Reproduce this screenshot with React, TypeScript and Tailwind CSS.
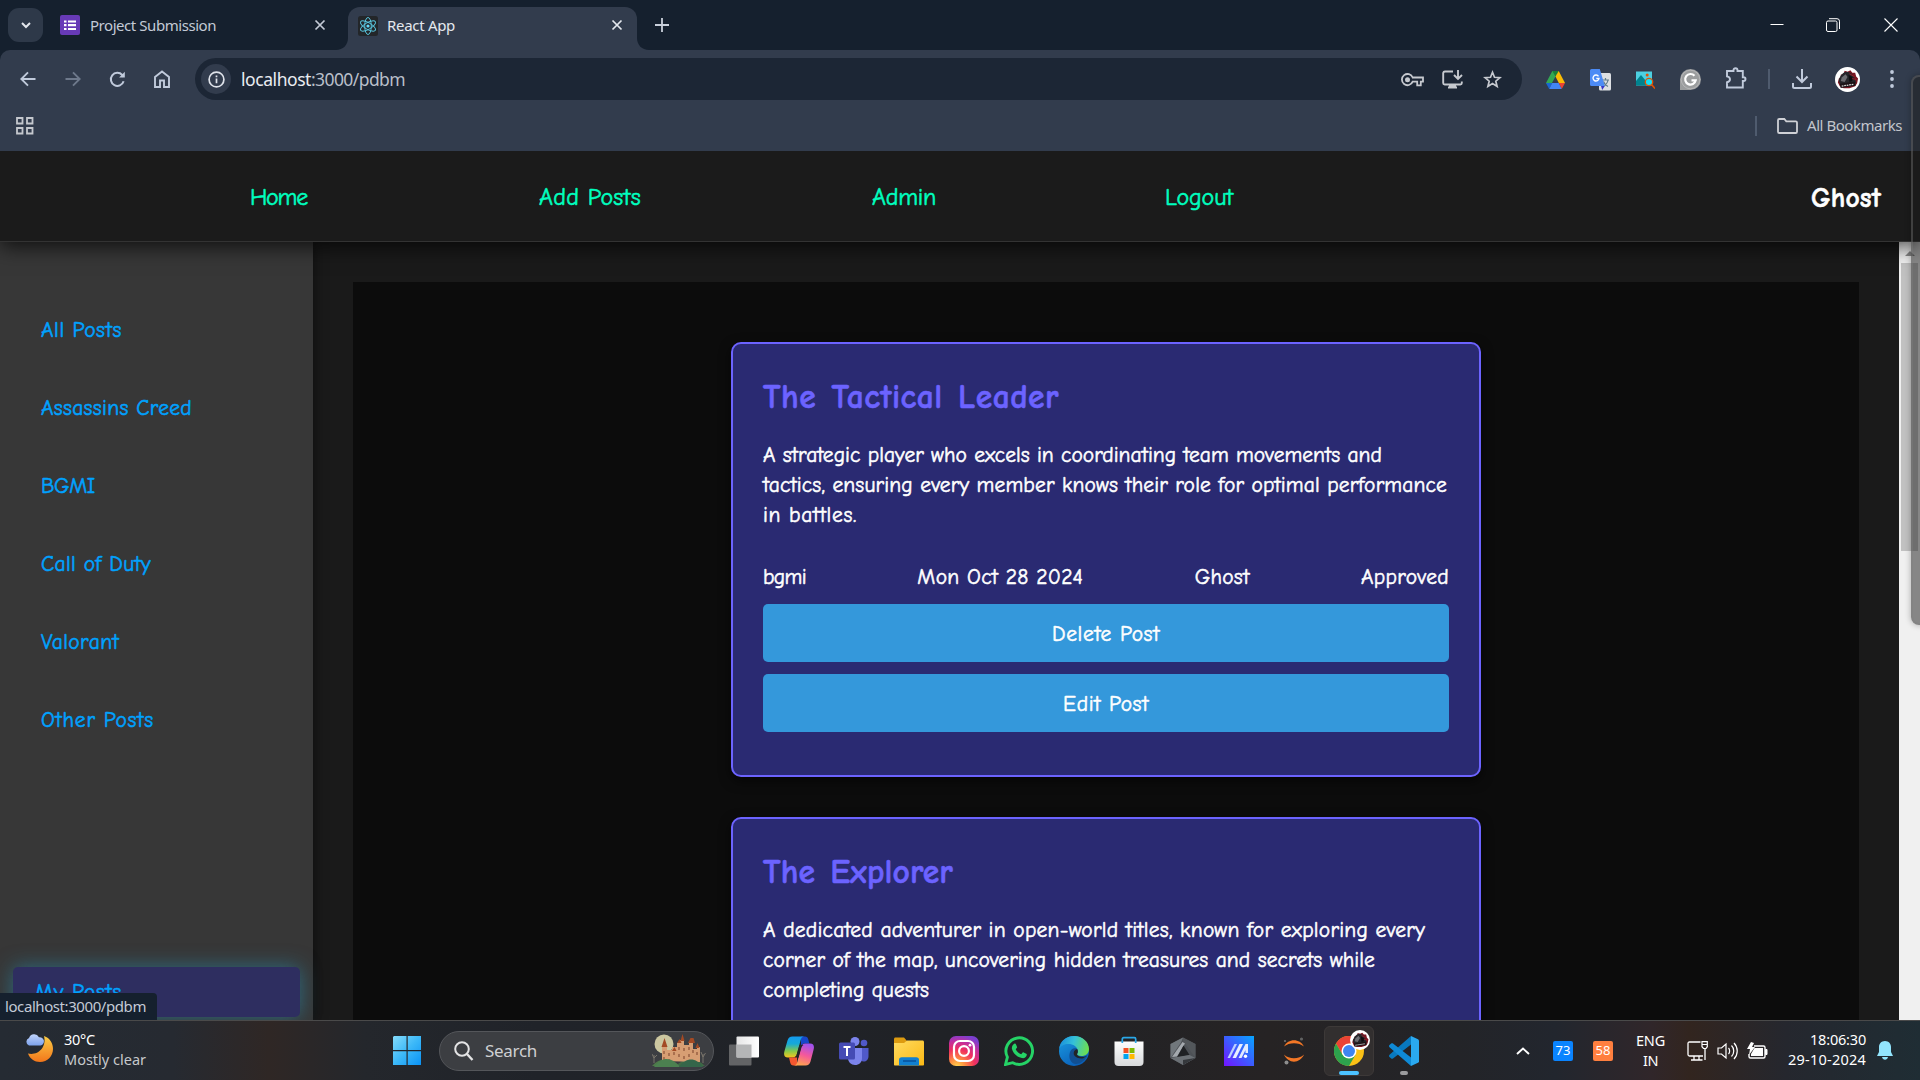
import { useLayoutEffect, useRef, useState } from "react";
import type { ReactNode } from "react";
import { clsx } from "clsx";

const comic = "font-['Comic_Sans_MS','Comic_Neue','Noto_Sans',sans-serif] [-webkit-text-stroke:0.55px_currentColor]";
const segoe = "font-['Segoe_UI','Noto_Sans',sans-serif]";

/** One line of text whose letter spacing is tuned so that it fills `width` pixels. */
function Fit({ width, className, children }: { width: number; className?: string; children: string }) {
  const ref = useRef<HTMLSpanElement>(null);
  const [spacing, setSpacing] = useState(0);
  useLayoutEffect(() => {
    if (ref.current) {
      const natural = ref.current.getBoundingClientRect().width;
      setSpacing((width - natural) / children.length);
    }
  }, [width, children]);
  return (
    <span ref={ref} className={clsx("inline-block w-fit whitespace-pre", className)} style={{ letterSpacing: `${spacing}px` }}>
      {children}
    </span>
  );
}

function Svg({ w, h = w, box, className, children }: { w: number; h?: number; box: string; className?: string; children: ReactNode }) {
  return (
    <svg width={w} height={h} viewBox={box} fill="none" className={clsx("block shrink-0", className)}>
      {children}
    </svg>
  );
}

function CloseX({ className }: { className?: string }) {
  return (
    <Svg w={12} box="0 0 12 12" className={className}>
      <path d="M1.500 1.500l9 9M10.500 1.500l-9 9" stroke="currentColor" strokeWidth="1.700" />
    </Svg>
  );
}

function GhostAvatar({ size }: { size: number }) {
  return (
    <Svg w={size} box="0 0 26 26">
      <circle cx="13" cy="13" r="13" fill="#fff" />
      <path d="M3 16l1-4 2-1 0-3 3-1 1-3 3 1 3-1.500 2 2.500 3 0 1 4 2 2-1 5-2 3-6 2-6 0-4-2z" fill="#7a1520" />
      <path d="M4 15c0-4 3-9 8-10 4 0 7 3 8 6l2 5-6 3-9 1z" fill="#26262a" />
      <path d="M7 11l4-3.500 2 3-3 5-4-1z" fill="#6d6d72" />
      <path d="M14 8l4 2.500v4l-3 1z" fill="#0d0d0f" />
      <path d="M15 7l5 3M18 12l4 1" stroke="#9c1c2a" strokeWidth="1" />
      <path d="M5 17.500l16-2.500 .4 4.500-15.500 2.300z" fill="#1b1316" />
      <path d="M7 19.800l12.500-1.900" stroke="#d8d8d8" strokeWidth="1.300" strokeDasharray="1.800 .8" />
    </Svg>
  );
}

function TitleBar() {
  return (
    <div className="flex h-[50px] items-center bg-[#15202e] text-[#c3cad6]">
      <div className="ml-2 flex h-[34px] w-[35px] items-center justify-center rounded-[11px] bg-[#2e3949]">
        <Svg w={12} box="0 0 12 12">
          <path d="M2 4l4 4 4-4" stroke="#e3e6ec" strokeWidth="2" />
        </Svg>
      </div>
      <Svg w={20} box="0 0 20 20" className="ml-[17px]">
        <rect width="20" height="20" rx="2" fill="#673ab7" />
        <path d="M4 6.500h2.500M4 10.200h2.500M4 14h2.500M8 6.500h8M8 10.200h8M8 14h8" stroke="#fff" strokeWidth="2.200" />
      </Svg>
      <Fit width={126} className="ml-2.5 text-[15px]">Project Submission</Fit>
      <CloseX className="ml-[98px]" />
      <svg width="12" height="12" viewBox="0 0 12 12" className="ml-[10px] block shrink-0 self-end">
        <path d="M12 0v12H0c7 0 12-5 12-12z" fill="#323c4d" />
      </svg>
      <div className="flex h-[43px] w-[289px] items-center self-end rounded-t-[12px] bg-[#323c4d] pb-[7px] text-[#e4e8ee]">
        <Svg w={20} box="0 0 20 20" className="mt-px ml-[10px]">
          <rect width="20" height="20" rx="2.500" fill="#232629" />
          <g stroke="#58c4dc" strokeWidth="1">
            <ellipse cx="10" cy="10" rx="8.500" ry="3.300" transform="rotate(90 10 10)" />
            <ellipse cx="10" cy="10" rx="8.500" ry="3.300" transform="rotate(30 10 10)" />
            <ellipse cx="10" cy="10" rx="8.500" ry="3.300" transform="rotate(150 10 10)" />
          </g>
          <circle cx="10" cy="10" r="1.600" fill="#61dafb" />
        </Svg>
        <Fit width={68} className="ml-[9px] text-[15px]">React App</Fit>
        <CloseX className="ml-[156px]" />
      </div>
      <svg width="12" height="12" viewBox="0 0 12 12" className="block shrink-0 self-end">
        <path d="M0 0v12h12C5 12 0 7 0 0z" fill="#323c4d" />
      </svg>
      <Svg w={14} box="0 0 14 14" className="ml-[6px]">
        <path d="M7 0v14M0 7h14" stroke="#c9d0db" strokeWidth="1.800" />
      </Svg>
      <div className="ml-auto flex items-center text-white">
        <Svg w={14} box="0 0 14 14"><path d="M0.500 6.500h13" stroke="#fff" /></Svg>
        <Svg w={14} box="0 0 14 14" className="ml-[42px]">
          <rect x="0.500" y="3" width="10.500" height="10.500" rx="1.500" stroke="#fff" />
          <path d="M3 .7h8a2.500 2.500 0 0 1 2.500 2.500V11" stroke="#fff" />
        </Svg>
        <Svg w={14} box="0 0 14 14" className="mr-[22px] ml-[44px]"><path d="M.5.5l13 13M13.500.5l-13 13" stroke="#fff" strokeWidth="1.100" /></Svg>
      </div>
    </div>
  );
}

function Toolbar() {
  return (
    <div className="relative z-[15] bg-[#15202e]">
      <div className="flex h-[58px] items-center rounded-t-[10px] bg-[#323c4d] text-[#c0cadb]">
        <Svg w={16} box="0 0 16 16" className="ml-5"><path d="M15.500 8H1.500M8 1.300L1.300 8 8 14.700" stroke="currentColor" strokeWidth="1.900" /></Svg>
        <Svg w={16} box="0 0 16 16" className="ml-[29px]"><path d="M.5 8h14M8 1.300L14.700 8 8 14.700" stroke="#6e798b" strokeWidth="1.900" /></Svg>
        <Svg w={17} box="0 0 17 17" className="ml-[28px]">
          <path d="M14.600 10.200A6.500 6.500 0 1 1 13.200 4l1.300 1.600" stroke="currentColor" strokeWidth="2" />
          <path d="M15.800.8v5.700h-5.700z" fill="currentColor" />
        </Svg>
        <Svg w={16} h={18} box="0 0 16 18" className="ml-[28px]"><path d="M1 7l7-5.500L15 7v10h-5v-6.500H6V17H1z" stroke="currentColor" strokeWidth="1.900" /></Svg>
        <div className="ml-[25px] flex h-[42px] w-[1327px] items-center rounded-full bg-[#1c2635]">
          <div className="ml-1.5 flex h-[30px] w-[30px] items-center justify-center rounded-full bg-[#323c4d]">
            <Svg w={17} box="0 0 17 17">
              <circle cx="8.500" cy="8.500" r="7.400" stroke="#dfe3ea" strokeWidth="1.700" />
              <path d="M8.500 7.500v4.700M8.500 4.400v1.800" stroke="#dfe3ea" strokeWidth="1.700" />
            </Svg>
          </div>
          <Fit width={70} className="mt-px ml-[10px] text-[17.5px] text-[#e9ecf1]">localhost</Fit>
          <Fit width={94} className="mt-px text-[17.5px] text-[#b9bfc9]">:3000/pdbm</Fit>
          <div className="ml-auto flex items-center text-[#c6c9cf]">
            <Svg w={23} h={14} box="0 0 23 14" className="mt-px">
              <path d="M11.700 4.500H22v4.200h-2.200v3.600h-3.600V8.700h-4.500A5.600 5.600 0 1 1 11.700 4.500z" stroke="currentColor" strokeWidth="1.800" />
              <circle cx="6.500" cy="6.800" r="2.500" fill="currentColor" />
            </Svg>
            <Svg w={21} h={19} box="0 0 21 19" className="mt-px ml-[18px]">
              <path d="M11 1.500H3A1.800 1.800 0 0 0 1.200 3v10c0 .8.700 1.500 1.500 1.500h15.600c.8 0 1.500-.7 1.500-1.500v-1.500M6 17.500h9M7 16h7M16 0v8.500M12 5l4 4 4-4" stroke="currentColor" strokeWidth="1.900" />
            </Svg>
            <Svg w={19} box="0 0 19 19" className="mr-[20px] ml-[20px]">
              <path d="M9.500 2.300l2 5 5.400.4-4.100 3.500 1.300 5.300-4.600-2.900-4.600 2.900 1.300-5.300-4.100-3.500 5.400-.4z" stroke="currentColor" strokeWidth="1.700" />
            </Svg>
          </div>
        </div>
        <Svg w={19} h={18} box="0 0 19 18" className="mt-px ml-6">
          <path d="M6.300 0h6.400L9.500 5.600 4 15.500 0 12z" fill="#34a853" />
          <path d="M6.300 0h6.400l-3.200 5.600z" fill="#188038" />
          <path d="M12.700 0L19 12h-6.200L9.500 5.600z" fill="#fbbc04" />
          <path d="M0 12h6.200l-3 6z" fill="#1967d2" />
          <path d="M6.200 12h6.600l3 6H3.200z" fill="#4285f4" />
          <path d="M12.800 12H19l-3.200 6z" fill="#ea4335" />
        </Svg>
        <Svg w={21} h={22} box="0 0 21 22" className="mt-px ml-[25px]">
          <rect x="9" y="4" width="12" height="17.500" rx="1.500" fill="#dcdfe3" />
          <path d="M12 11h7M15.500 9v2M13 17.500c3-1.500 4.500-3.500 5-6.500M13.500 12.500c.8 2.500 2.500 4 4.500 5" stroke="#607d8b" strokeWidth="1.200" />
          <path d="M1.500 0h8.300l5 17H1.500A1.500 1.500 0 0 1 0 15.500v-14A1.500 1.500 0 0 1 1.500 0z" fill="#4c8bf5" />
          <path d="M11 17h3.800l-2.600 4z" fill="#3538c8" />
          <path d="M8.500 7.300A3 3 0 1 0 9 9.500H6.300" stroke="#fff" strokeWidth="1.400" />
        </Svg>
        <Svg w={19} h={18} box="0 0 19 18" className="mt-px ml-[25px]">
          <rect width="16" height="14" y="0.500" fill="#4dd0e1" />
          <path d="M0 14.500V10l5-6 5 6v4.500z" fill="#00838f" />
          <circle cx="11.200" cy="4" r="1.500" fill="#e65100" />
          <circle cx="13" cy="11" r="3.700" fill="#18e0f5" stroke="#e65100" strokeWidth="1.300" />
          <path d="M15.700 13.800L19 17.500" stroke="#e65100" strokeWidth="1.600" />
        </Svg>
        <Svg w={21} box="0 0 21 21" className="mt-px ml-[25px]">
          <path d="M10.500 0A10.500 10.500 0 1 1 10.500 21H0V10.500A10.500 10.500 0 0 1 10.500 0z" fill="#9b9d9e" />
          <circle cx="10.500" cy="10.500" r="9.300" stroke="#bcbdbe" strokeWidth=".8" />
          <path d="M14.500 6.800A5.300 5.300 0 1 0 15.700 11.300H11.500" stroke="#fff" strokeWidth="2.200" />
        </Svg>
        <Svg w={22} h={22} box="0 0 22 22" className="mb-[2px] ml-[24px]">
          <path d="M2 4h6.500V3.200a2 2 0 0 1 4 0V4h5.300v6.200h.8a1.900 1.900 0 0 1 0 3.800h-.8v6.500H2v-5.300c4-.6 4-5.200 0-5.800z" stroke="currentColor" strokeWidth="1.900" />
        </Svg>
        <div className="ml-[21px] h-5 w-0.5 bg-[#4f5b6e]" />
        <Svg w={20} h={20} box="0 0 20 20" className="ml-[22px]">
          <path d="M1 14v3.500c0 .8.500 1.500 1.500 1.500h15c1 0 1.500-.7 1.500-1.500V14M10 0v12.500M4.500 7.500L10 13l5.500-5.500" stroke="currentColor" strokeWidth="2" />
        </Svg>
        <div className="ml-[23px]"><GhostAvatar size={25} /></div>
        <Svg w={4} h={18} box="0 0 4 18" className="ml-[30px]">
          <circle cx="2" cy="2" r="1.900" fill="currentColor" /><circle cx="2" cy="9" r="1.900" fill="currentColor" /><circle cx="2" cy="16" r="1.900" fill="currentColor" />
        </Svg>
      </div>
      <div className="flex h-[43px] items-center bg-[#323c4d] pb-[9px]">
        <Svg w={18} box="0 0 18 18" className="mt-px ml-4">
          <path d="M1 1h5.500v5.500H1zM11 1h5.500v5.500H11zM1 11h5.500v5.500H1zM11 11h5.500v5.500H11z" stroke="#c5c8ce" strokeWidth="1.800" />
        </Svg>
        <div className="mt-px ml-auto h-5 w-0.5 bg-[#4f5b6e]" />
        <Svg w={21} h={16} box="0 0 21 16" className="mt-px ml-[20px]">
          <path d="M1 2.300C1 1.500 1.500 1 2.300 1h5l2 2.300h9.400c.8 0 1.300.5 1.300 1.200v9.200c0 .8-.5 1.300-1.300 1.300H2.300c-.8 0-1.300-.5-1.300-1.300z" stroke="#cfd1d6" strokeWidth="1.800" />
        </Svg>
        <Fit width={95} className="mt-px mr-[18px] ml-[9px] text-[15px] text-[#c3c6cc]">All Bookmarks</Fit>
      </div>
    </div>
  );
}

function SiteNav() {
  return (
    <nav className={clsx("relative z-10 flex h-[91px] items-center border-b border-[#333] bg-[#1b1b1b] pt-0.5 text-[24px] text-[#00ffbf] shadow-[0_4px_20px_rgba(0,0,0,0.75)]", comic)}>
      <Fit width={57} className="ml-[250px]">Home</Fit>
      <Fit width={102} className="ml-[232px]">Add Posts</Fit>
      <Fit width={64} className="ml-[231px]">Admin</Fit>
      <Fit width={68} className="ml-[229px]">Logout</Fit>
      <Fit width={70} className="mt-1 mr-[39px] ml-auto text-[27.5px] font-bold text-white">Ghost</Fit>
    </nav>
  );
}

const categories: [string, number][] = [
  ["All Posts", 81],
  ["Assassins Creed", 151],
  ["BGMI", 54],
  ["Call of Duty", 110],
  ["Valorant", 78],
  ["Other Posts", 113],
];

function Sidebar() {
  return (
    <aside className={clsx("relative z-[1] flex h-full w-[313px] shrink-0 flex-col bg-[#373737] pt-[49px] text-[21.5px] text-[#00a2ff] shadow-[2px_0_12px_rgba(0,0,0,0.4)]", comic)}>
      {categories.map(([name, width]) => (
        <div key={name} className="flex h-[78px] shrink-0 items-center pl-[41px]">
          <Fit width={width}>{name}</Fit>
        </div>
      ))}
      <div className="mt-auto mb-[3px] ml-[13px] flex h-[50px] w-[287px] items-center rounded-[5px] bg-[#2e2e60] pl-[22px] shadow-[0_0_20px_rgba(36,150,190,0.55)]">
        <Fit width={87}>My Posts</Fit>
      </div>
    </aside>
  );
}

type Post = {
  title: string;
  titleWidth: number;
  lines: [string, number][];
  meta?: [string, number][];
  actions?: [string, number][];
};

const posts: Post[] = [
  {
    title: "The Tactical Leader",
    titleWidth: 296,
    lines: [
      ["A strategic player who excels in coordinating team movements and", 619],
      ["tactics, ensuring every member knows their role for optimal performance", 684],
      ["in battles.", 94],
    ],
    meta: [["bgmi", 43], ["Mon Oct 28 2024", 166], ["Ghost", 55], ["Approved", 88]],
    actions: [["Delete Post", 108], ["Edit Post", 86]],
  },
  {
    title: "The Explorer",
    titleWidth: 190,
    lines: [
      ["A dedicated adventurer in open-world titles, known for exploring every", 662],
      ["corner of the map, uncovering hidden treasures and secrets while", 612],
      ["completing quests", 166],
    ],
  },
];

function PostCard({ post }: { post: Post }) {
  return (
    <article className="h-[435px] w-[750px] shrink-0 rounded-[10px] border-2 border-[#6c63ff] bg-[#2a2a72] px-[30px] text-[21.5px] leading-[30px] text-white shadow-[0_4px_12px_rgba(0,0,0,0.6)]">
      <h2 className="mt-[31px] h-[48px] text-[33.5px] leading-[44px] font-bold text-[#6c63ff] [word-spacing:3px]">
        <Fit width={post.titleWidth}>{post.title}</Fit>
      </h2>
      <div className="mt-[17px] h-[90px]">
        {post.lines.map(([line, width]) => (
          <p key={line} className="h-[30px]"><Fit width={width}>{line}</Fit></p>
        ))}
      </div>
      {post.meta && (
        <div className="mt-8 flex justify-between">
          {post.meta.map(([text, width]) => <Fit key={text} width={width}>{text}</Fit>)}
        </div>
      )}
      {post.actions?.map(([label, width]) => (
        <button key={label} className="mt-3 flex h-[58px] w-full items-center justify-center rounded-[5px] bg-[#3498db] pt-0.5">
          <Fit width={width}>{label}</Fit>
        </button>
      ))}
    </article>
  );
}

function TaskIcons() {
  return (
    <div className="ml-[15px] flex items-center gap-[25px]">
      <Svg w={30} box="0 0 30 30">
        <rect x="0" y="8.500" width="22.500" height="21" rx="1" fill="#636466" />
        <rect x="7.500" y="0.500" width="22.500" height="21" rx="1" fill="url(#tv)" />
        <rect x="7.500" y="8.500" width="15" height="13" fill="#b5b6b7" />
        <defs><linearGradient id="tv"><stop stopColor="#e6e6e6" /><stop offset="1" stopColor="#fff" /></linearGradient></defs>
      </Svg>
      <Svg w={30} box="0 0 30 30">
        <defs>
          <linearGradient id="cpa" x1="0" y1="0" x2="0" y2="1"><stop stopColor="#149bf0" /><stop offset=".35" stopColor="#16a9d8" /><stop offset=".7" stopColor="#87c948" /><stop offset="1" stopColor="#f7c51e" /></linearGradient>
          <linearGradient id="cpb" x1=".6" y1="0" x2=".3" y2="1"><stop stopColor="#a052ee" /><stop offset=".5" stopColor="#f5589b" /><stop offset="1" stopColor="#ffa64d" /></linearGradient>
        </defs>
        <path d="M17 0.500h4c2 0 2.800 1.300 3.300 3l1 4h-4.800c-2 0-3 1-3.500 3z" fill="#1747c9" />
        <path d="M8.500.5H20c-2 .3-2.800 1.500-3.300 3.500l-3.900 14c-.6 2.300-1.800 3.500-4 3.500H4c-4 0-4.500-3-3.500-6.500l3-10.500c.8-2.500 2.300-4 5-4z" fill="url(#cpa)" />
        <path d="M13 29.500H9.500c-2 0-2.800-1.300-3.300-3L5 21.500h4.500c2 0 3-1 3.500-3z" fill="#f4572f" />
        <path d="M21.500 29.500H10c2-.3 2.800-1.500 3.300-3.500l3.900-15c.6-2.300 1.800-3.500 4-3.500H26c4 0 4.500 3 3.500 6.500l-3 11.500c-.8 2.500-2.300 4-5 4z" fill="url(#cpb)" />
        <path d="M15.500 9h4c-1.200.7-1.800 1.500-2.200 3l-2.700 9.500h-3.800c1.200-.7 1.700-1.700 2.100-3.200z" fill="#222427" />
      </Svg>
      <Svg w={30} box="0 0 30 30">
        <circle cx="16" cy="5.500" r="4.500" fill="#7b83eb" />
        <circle cx="25" cy="7" r="3.300" fill="#5059c9" />
        <path d="M21 12h8.500v8c0 3.500-2 5.500-5 5.500-2 0-3.500-1-3.500-3z" fill="#5059c9" />
        <path d="M9 12h14v10c0 4.500-3 7-7 7s-7-3-7-7z" fill="#7b83eb" />
        <rect y="6.500" width="16" height="17" rx="1.500" fill="#454bb5" />
        <path d="M4.500 11h7M8 11v9" stroke="#fff" strokeWidth="2" />
      </Svg>
      <Svg w={30} box="0 0 30 30">
        <defs><linearGradient id="fe" x1="0" y1="0" x2="1" y2="1"><stop stopColor="#ffdb60" /><stop offset="1" stopColor="#fbb915" /></linearGradient></defs>
        <path d="M0 7V3c0-.9.600-1.500 1.500-1.500H10l3 3.500-3 3z" fill="#dd9b10" />
        <path d="M0 7h10l3-2.500h15.500c.9 0 1.500.6 1.500 1.500v22.500c0 .6-.5 1-1 1H1c-.6 0-1-.4-1-1z" fill="url(#fe)" />
        <path d="M5 29.500V24c0-1.800 1-2.700 2.700-2.700h14.600c1.700 0 2.700 1 2.700 2.700v5.500z" fill="#1180d0" />
        <path d="M9 25h13" stroke="#07519b" strokeWidth="1.500" />
      </Svg>
      <Svg w={30} box="0 0 30 30">
        <defs>
          <radialGradient id="ig" cx=".27" cy="1.050" r="1.100"><stop stopColor="#ffdc50" /><stop offset=".25" stopColor="#ff9040" /><stop offset=".55" stopColor="#f0305e" /><stop offset=".8" stopColor="#c12fa0" /><stop offset="1" stopColor="#7b3fd0" /></radialGradient>
        </defs>
        <rect width="30" height="30" rx="7" fill="url(#ig)" />
        <rect x="5" y="5" width="20" height="20" rx="6" stroke="#fff" strokeWidth="2.200" />
        <circle cx="15" cy="15" r="4.900" stroke="#fff" strokeWidth="2.200" />
        <circle cx="21" cy="9.200" r="1.400" fill="#fff" />
      </Svg>
      <Svg w={30} box="0 0 30 30">
        <path d="M1.500 28.500l1.900-7.300A13.300 13.300 0 1 1 8.700 26.700z" stroke="#25d366" strokeWidth="2.900" />
        <path d="M10.300 7.800c.7-.5 1.300-.3 1.600.4l1.100 2.600c.2.500 0 1-.3 1.300l-1 1.200c1.200 2.400 3 4 5.500 5l1.300-1.600c.3-.4.800-.5 1.200-.3l2.600 1.300c.5.300.6.800.5 1.300-.5 2.400-2.500 3.600-4.900 3.100-5.300-1.200-9-4.900-10-9.300-.3-2 .8-4 2.400-5z" fill="#25d366" />
      </Svg>
      <Svg w={30} box="0 0 30 30">
        <defs>
          <linearGradient id="eda" x1="0" y1=".4" x2="1" y2=".6"><stop stopColor="#1a8fdc" /><stop offset=".45" stopColor="#35c1d9" /><stop offset="1" stopColor="#6fe04a" /></linearGradient>
          <linearGradient id="edb" x1="0" y1="0" x2=".6" y2="1"><stop stopColor="#1b9de2" /><stop offset="1" stopColor="#0a5fb8" /></linearGradient>
        </defs>
        <circle cx="15" cy="15" r="15" fill="url(#edb)" />
        <path d="M0 13C1 5 7.500 0 15 0c8.500 0 15 6 15 13 0 4.500-3.500 7-7.500 7-3 0-5-1-4.500-2.200.7-1 1-2 .8-3.300C18.200 10.500 14 8 9.500 8 5 8 1.500 10 0 13z" fill="url(#eda)" />
        <path d="M11 16c1-3 4-4.500 6.500-3.500 1.200 2 1.300 3.500.5 5.300-.5 1.700 2 3.200 5.500 3 2 0 3.500-.6 4.800-1.300C26 25 21 28 17 28c-5 0-8-6-6-12z" fill="#114f92" />
        <path d="M18.200 13c1 1.800.8 3.300 0 4.800-.6 1.700 2 3.200 5.500 3 2 0 3.800-.8 5-1.600l-4.500 3c-5 1-10-1.700-9.500-5.500.3-2 1.800-3.400 3.500-3.700z" fill="#222427" />
      </Svg>
      <Svg w={30} box="0 0 30 30">
        <defs><linearGradient id="ms" x1="0" y1="0" x2="0" y2="1"><stop stopColor="#fdfdfd" /><stop offset="1" stopColor="#d8dadc" /></linearGradient></defs>
        <path d="M.5 5.500h29V26a4 4 0 0 1-4 4h-21a4 4 0 0 1-4-4z" fill="url(#ms)" />
        <path d="M8.300 7V3c0-.8.500-1.300 1.300-1.300h10.800c.8 0 1.300.5 1.300 1.300v4" stroke="#2aa8e8" strokeWidth="1.700" />
        <path d="M9.500 12h5v5h-5z" fill="#f25022" /><path d="M15.500 12h5v5h-5z" fill="#7fba00" /><path d="M9.500 18h5v5h-5z" fill="#00a4ef" /><path d="M15.500 18h5v5h-5z" fill="#ffb900" />
      </Svg>
      <Svg w={30} box="0 0 30 30">
        <path d="M14 1.500l12.500 6.500v14L14 29 1.500 22V8z" fill="#4d5156" />
        <path d="M14 1.500L1.500 8v14L12 6.500z" fill="#71777c" />
        <path d="M14 1.500L26.500 8v14L14 5z" fill="#53575b" />
        <path d="M3 21L13.500 6l2.500 1.500L8 20.500z" fill="#a4a9ae" />
        <path d="M14.500 9.500l6 9.500-12.500 2.500z" fill="#1f2124" />
        <path d="M1.500 22l19-3 6 3L14 29z" fill="#6b7075" />
        <path d="M14 29v-5l12.500-2z" fill="#35383c" />
      </Svg>
      <Svg w={30} box="0 0 30 30">
        <defs><linearGradient id="ar" x1="0" y1="1" x2="1" y2="0"><stop stopColor="#7213ff" /><stop offset=".5" stopColor="#3c5cff" /><stop offset="1" stopColor="#06a6ff" /></linearGradient></defs>
        <rect width="30" height="30" fill="url(#ar)" />
        <path d="M3.500 22L10.500 8H13L6 22z" fill="#bcd0ff" /><path d="M8.500 22l7-14H19l-7 14z" fill="#e8eeff" />
        <path d="M14.500 22l7-14h2.500v9h-2.500v-3l-4 8z" fill="#e2eaff" /><circle cx="21.500" cy="20.300" r="1.700" fill="#fff" />
      </Svg>
      <Svg w={30} box="0 0 30 30">
        <path d="M5 10.500C9 2 21 2 25 10.500 20 6 10 6 5 10.500z" fill="#f37726" /><path d="M5 18.500C9 28 21 28 25 18.500 20 23.500 10 23.500 5 18.500z" fill="#f37726" />
        <circle cx="22.500" cy="3" r="1.600" fill="#616262" /><circle cx="6" cy="5" r="1.100" fill="#707070" /><circle cx="7.500" cy="26.500" r="2" fill="#8e8e8e" />
      </Svg>
    </div>
  );
}

function Chrome() {
  return (
    <Svg w={30} box="0 0 30 30">
      <circle cx="15" cy="15" r="15" fill="#fbc116" />
      <path d="M2 7.500A15 15 0 0 1 28 7.500H15L8.500 18.700z" fill="#ea4335" />
      <path d="M2 7.500A15 15 0 0 0 15 30l6.500-11.300L8.500 18.700z" fill="#2da24d" />
      <circle cx="15" cy="15" r="7.500" fill="#fff" /><circle cx="15" cy="15" r="6" fill="#3f85f2" />
    </Svg>
  );
}

function Taskbar() {
  return (
    <footer className="flex h-[60px] shrink-0 items-center border-t border-[#4a4a4a] bg-[linear-gradient(90deg,#252b33_0%,#262a31_9%,#2f2725_14%,#24272c_19%,#202329_28%,#202226_50%,#262324_66%,#232428_76%,#22262e_81%,#30262a_86%,#32251f_88%,#25272e_93%,#1f2d34_100%)] text-white">
      <Svg w={28} box="0 0 28 28" className="mb-[5px] ml-[25px]">
        <defs>
          <linearGradient id="mo" x1="0" y1="0" x2="0" y2="1"><stop stopColor="#fbcd45" /><stop offset="1" stopColor="#f2761b" /></linearGradient>
          <linearGradient id="cl" x1="0" y1="0" x2="0" y2="1"><stop stopColor="#c0d3fa" /><stop offset="1" stopColor="#7da2ec" /></linearGradient>
        </defs>
        <path d="M19 2c6 2 9 7.500 9 13 0 7-5.500 13-13 13-5.500 0-10-3-12-8.500C12 22 22 14 19 2z" fill="url(#mo)" />
        <path d="M4 11.500a4 4 0 0 1 0-7.500A5.500 5.500 0 0 1 14 3.200a4.200 4.200 0 0 1 1.500 8.300z" fill="url(#cl)" />
      </Svg>
      <div className="mb-[3px] ml-[11px] flex flex-col text-[14.5px] leading-5">
        <Fit width={31}>30°C</Fit>
        <Fit width={82} className="text-[#c5c8cb]">Mostly clear</Fit>
      </div>
      <Svg w={28} h={29} box="0 0 28 29" className="ml-[247px]">
        <defs><linearGradient id="wn" x1="0" y1="0" x2="1" y2="1"><stop stopColor="#85dcfb" /><stop offset=".5" stopColor="#3cb8f8" /><stop offset="1" stopColor="#0a92f5" /></linearGradient></defs>
        <path d="M1 0h12.500v14H0V1zM14.700 0H28v14H14.700zM0 15.200h13.500V29H0zM14.700 15.200H28V29H14.700z" fill="url(#wn)" />
      </Svg>
      <div className="ml-[18px] flex h-10 w-[275px] shrink-0 items-center rounded-full border border-[#54565a] bg-[#3c3e42]">
        <Svg w={20} box="0 0 20 20" className="ml-[14px]"><circle cx="8" cy="8" r="6.800" stroke="#e4e4e5" strokeWidth="2" /><path d="M13 13l5.500 6" stroke="#e4e4e5" strokeWidth="2.400" /></Svg>
        <Fit width={52} className="ml-[11px] text-[17px] text-[#cfd0d2]">Search</Fit>
        <Svg w={54} h={34} box="0 0 54 34" className="mr-[7px] ml-auto">
          <circle cx="12" cy="10" r="9.500" fill="#ccc7a0" />
          <path d="M0 32c8-9 18-9 27 0z" fill="#4f7a49" /><path d="M24 32c8-9 20-9 29 0z" fill="#3f6a45" />
          <path d="M10 27V13h5v3h5V13h5V9h3V6h4v5h5v-2h4v6h4v-2h3v15z" fill="#d79e73" />
          <path d="M9.500 13l3-9 3 9zM25 9l2.500-4 2 4zM28.500 7l2-7 2 7zM36 9h7l-1.500-5h-3zM43.500 14l2-5 2 5zM20 17l2.500-4 2 4z" fill="#a34a24" />
          <path d="M12 17v3M17 19v3M22 18v3M27 13v3M32 14v3M37 13v3M41 16v3M17 25v2M27 20v3M32 22v3M37 20v3M45 18v3M12 23v3" stroke="#8a5238" strokeWidth="1.200" />
          <path d="M2 29v-8M0 20l2 4 3-3M51 29v-9M49 18l2 5 2.500-4" stroke="#77736a" />
          <path d="M2 33c8-11 18-10 26 0z" fill="#4c8050" /><path d="M27 33c7-10 17-10 24 0z" fill="#35664a" />
        </Svg>
      </div>
      <TaskIcons />
      <div className="relative ml-[15px] flex h-[50px] w-[50px] items-center justify-center rounded-[6px] border border-[#3d3938] bg-[#322f2f]">
        <Chrome />
        <div className="absolute top-[3px] left-[25px]"><GhostAvatar size={20} /></div>
        <div className="absolute bottom-0 left-[14px] h-1 w-5 rounded-full bg-[#4cc2ff]" />
      </div>
      <div className="relative ml-[15px]">
        <Svg w={30} box="0 0 30 30">
          <path d="M22 0v8.500L4 22.500c-.6.500-1.300.4-1.800 0L.5 21c-.7-.6-.7-1.500 0-2.200z" fill="#0879bf" />
          <path d="M22 30v-8.500L4 7.500c-.6-.5-1.300-.4-1.800 0L.5 9c-.7.6-.7 1.500 0 2.200z" fill="#0f8ad6" />
          <path d="M22 0l7 3.200c.7.400 1 .9 1 1.600v20.400c0 .7-.3 1.200-1 1.600L22 30z" fill="#2aa9f0" />
        </Svg>
        <div className="absolute top-[35px] left-[11px] h-1 w-2 rounded-full bg-[#9b9b9d]" />
      </div>
      <div className="ml-auto flex items-center">
        <Svg w={14} h={8} box="0 0 14 8"><path d="M1 7l6-5.500L13 7" stroke="#fff" strokeWidth="1.900" /></Svg>
        <div className="ml-[23px] flex h-5 w-5 items-center justify-center rounded-[2px] bg-[#0a84ff] text-[13px]"><Fit width={15}>73</Fit></div>
        <div className="ml-5 flex h-5 w-5 items-center justify-center rounded-[2px] bg-[#ff7f3f] text-[13px]"><Fit width={15}>58</Fit></div>
        <div className="mb-0.5 ml-[23px] flex flex-col items-center text-[14.5px] leading-5"><Fit width={29}>ENG</Fit><Fit width={15}>IN</Fit></div>
        <Svg w={21} h={20} box="0 0 21 20" className="ml-[22px]">
          <path d="M13.500 1H2.500C1.500 1 1 1.500 1 2.500v11c0 1 .5 1.500 1.500 1.500H16M4 19h11.500M7 15v4M12 15v4M18 8v11" stroke="#fff" strokeWidth="1.300" />
          <path d="M15 .7h5.300v5L19 7.500h-2.500L15 5.700zM15 3.500h5" stroke="#fff" strokeWidth="1.200" />
        </Svg>
        <Svg w={21} h={18} box="0 0 21 18" className="ml-[9px]">
          <path d="M1 6v6h3.500L9 16V2L4.500 6z" stroke="#fff" strokeWidth="1.200" />
          <path d="M11.500 6c1.500 1.500 1.500 4.500 0 6M14.500 3.500c3 3 3 8 0 11M17 1c4.300 4.500 4.300 11.500 0 16" stroke="#fff" strokeWidth="1.200" />
        </Svg>
        <Svg w={21} h={18} box="0 0 21 18" className="ml-[9px]">
          <path d="M7 4h9.500c1 0 1.500.6 1.500 1.500v9c0 1-.6 1.500-1.500 1.500h-13C2.500 16 2 15.500 2 14.500V12" stroke="#fff" strokeWidth="1.400" />
          <path d="M7.500 6H16v8H4v-2z" fill="#fff" /><path d="M18.500 7.500H20v5h-1.500z" fill="#fff" stroke="#fff" />
          <path d="M4 0L0 7h3l-1 6 6-8H5l2-4z" fill="#fff" />
        </Svg>
        <div className="mb-[3px] ml-[20px] flex flex-col items-end text-[14.5px] leading-5"><Fit width={56}>18:06:30</Fit><Fit width={78}>29-10-2024</Fit></div>
        <Svg w={16} h={19} box="0 0 16 19" className="mr-[27px] ml-[11px]">
          <path d="M8 0c3.800 0 6 2.800 6 6v5l2 4H0l2-4V6c0-3.200 2.200-6 6-6zM5 16h6c-.5 1.800-1.500 2.700-3 2.700S5.500 17.800 5 16z" fill="#92e5fd" />
        </Svg>
      </div>
    </footer>
  );
}

export default function App() {
  return (
    <div className={clsx("relative flex h-[1080px] w-[1920px] flex-col overflow-hidden", segoe)}>
      <TitleBar />
      <Toolbar />
      <SiteNav />
      <div className="relative flex min-h-0 flex-1 overflow-hidden bg-[#1a1a1a]">
        <Sidebar />
        <main className={clsx("mt-10 ml-10 flex w-[1506px] shrink-0 flex-col items-center gap-10 bg-[#0c0c0c] pt-[60px]", comic)}>
          {posts.map((post) => (
            <PostCard key={post.title} post={post} />
          ))}
        </main>
        <div className="ml-auto flex w-[21px] shrink-0 flex-col items-center bg-[#f0f0f0]">
          <Svg w={10} h={5} box="0 0 10 5" className="mt-[9px]"><path d="M0 5l5-5 5 5z" fill="#8a8a8a" /></Svg>
          <div className="mt-[7px] h-[288px] w-[17px] bg-[#c1c1c1]" />
        </div>
        <div className="absolute bottom-0 left-0 z-10 flex h-[27px] w-[157px] items-center rounded-tr-[4px] bg-[#15202e] pl-[5px] text-[15px] text-[#c3cad6]">
          <Fit width={141}>localhost:3000/pdbm</Fit>
        </div>
      </div>
      <Taskbar />
      <div className="absolute top-[75px] left-[1911px] z-20 h-[550px] w-[20px] rounded-[8px] border-2 border-[#80808060] bg-[#1c1c1c80] shadow-[0_0_6px_rgba(0,0,0,0.3)]" />
    </div>
  );
}
